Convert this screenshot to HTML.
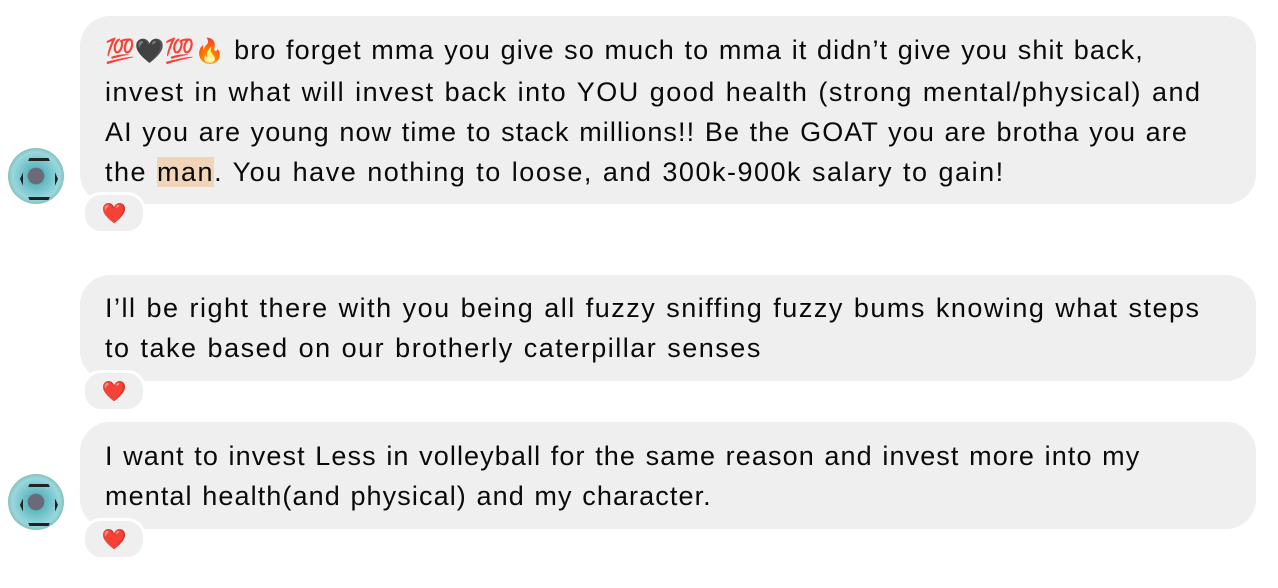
<!DOCTYPE html>
<html><head><meta charset="utf-8"><style>
body{margin:0;width:1278px;height:588px;background:#fff;position:relative;overflow:hidden;font-family:"Liberation Sans",sans-serif;}
.b{position:absolute;left:80px;width:1176px;background:#efefef;border-radius:30px;box-sizing:border-box;padding:0 25px;font-size:27px;line-height:40px;color:#0a0a0a;letter-spacing:1.1px;word-spacing:1px;white-space:nowrap}
.r{position:absolute;left:82px;width:58px;height:36px;background:#efefef;border-radius:19px;border:3px solid #fff;text-align:center;line-height:38px;font-size:20px}
.av{position:absolute;left:8px;width:56px;height:56px;border-radius:50%;background:radial-gradient(circle at 50% 50%,#6a6a78 0 20%,#5fb8c0 22%,#9ad7de 60%,#4c8a5a 100%);overflow:hidden}
.av:after{content:"";position:absolute;left:12px;top:10px;width:32px;height:36px;border:3px solid #222;clip-path:polygon(25% 0,75% 0,100% 50%,75% 100%,25% 100%,0 50%)}
.hl{background:#f0d5b8}
.e{font-size:24px;letter-spacing:0}
.s{letter-spacing:1.5px}
</style></head><body>
<div class="b" style="top:16px;height:188px;padding-top:14px"><span class="e">💯🖤💯🔥</span> bro forget mma you give so much to mma it didn’t give you shit back,<br><span class="s">invest in what will invest back into YOU good health (strong mental/physical) and</span><br>AI you are young now time to stack millions!! Be the GOAT you are brotha you are<br><span class="s">the <span class="hl">man</span>. You have nothing to loose, and 300k-900k salary to gain!</span></div>
<div class="av" style="top:148px"></div>
<div class="r" style="top:192px">❤️</div>
<div class="b s" style="top:275px;height:106px;padding-top:13px">I’ll be right there with you being all fuzzy sniffing fuzzy bums knowing what steps<br>to take based on our brotherly caterpillar senses</div>
<div class="r" style="top:370px">❤️</div>
<div class="b" style="top:422px;height:107px;padding-top:14px">I want to invest Less in volleyball for the same reason and invest more into my<br>mental health(and physical) and my character.</div>
<div class="av" style="top:474px"></div>
<div class="r" style="top:518px">❤️</div>
</body></html>
